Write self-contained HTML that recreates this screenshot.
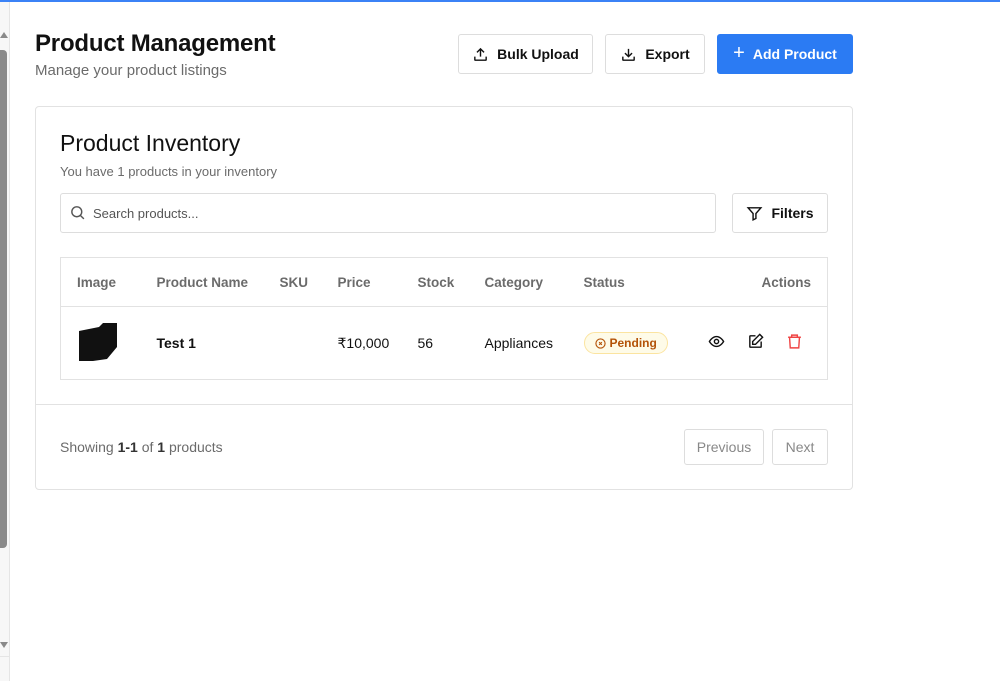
<!DOCTYPE html>
<html><head><meta charset="utf-8"><style>
*{box-sizing:border-box;margin:0;padding:0}
body{width:1000px;height:681px;background:#fff;font-family:"Liberation Sans","DejaVu Sans",sans-serif;position:relative;overflow:hidden;color:#111}
.top{position:absolute;left:0;top:0;width:1000px;height:2px;background:#3b82f6}
.sb{position:absolute;left:0;top:2px;width:10px;height:679px;background:#f7f7f7;border-right:1px solid #e5e5e5}
.thumb{position:absolute;left:0;top:48px;width:7px;height:498px;background:#8a8a8a;border-radius:0 4px 4px 0}
.abs{position:absolute}
h1{position:absolute;left:35px;top:30px;font-size:24px;font-weight:bold;letter-spacing:-0.2px}
.sub{left:35px;top:62px;font-size:15px;color:#6b6b6b}
.btn{position:absolute;height:40px;border:1px solid #ddd;border-radius:3px;display:flex;align-items:center;justify-content:center;gap:8px;font-size:14px;font-weight:bold;background:#fff}
.card{position:absolute;left:35px;top:106px;width:818px;height:384px;border:1px solid #e2e2e2;border-radius:4px}
table{position:absolute;left:60px;top:257px;width:768px;height:123px;border:1px solid #e2e2e2;border-collapse:collapse;font-size:14px}
th{text-align:left;color:#6b6b6b;font-weight:bold;height:49px;border-bottom:1px solid #e2e2e2;font-size:13.5px}
td{height:73px}
</style></head><body>
<div class="top"></div>
<div class="sb"><div class="thumb"></div>
<div class="abs" style="left:0;top:30px;width:0;height:0;border-left:4px solid transparent;border-right:4px solid transparent;border-bottom:6px solid #8a8a8a"></div>
<div class="abs" style="left:0;top:640px;width:0;height:0;border-left:4px solid transparent;border-right:4px solid transparent;border-top:6px solid #8a8a8a"></div>
<div class="abs" style="left:0;top:654px;width:10px;height:1px;background:#e5e5e5"></div></div>
<h1>Product Management</h1>
<div class="abs sub">Manage your product listings</div>
<div class="btn" style="left:458px;top:34px;width:135px"><svg width="17" height="17" viewBox="0 0 24 24" fill="none" stroke="#111" stroke-width="2"><path d="M4 15v4a1 1 0 001 1h14a1 1 0 001-1v-4M12 15V4M7 9l5-5 5 5"/></svg>Bulk Upload</div>
<div class="btn" style="left:605px;top:34px;width:100px"><svg width="17" height="17" viewBox="0 0 24 24" fill="none" stroke="#111" stroke-width="2"><path d="M4 15v4a1 1 0 001 1h14a1 1 0 001-1v-4M12 4v11M7 10l5 5 5-5"/></svg>Export</div>
<div class="btn" style="left:717px;top:34px;width:136px;background:#2b7bf3;border-color:#2b7bf3;color:#fff"><span style="font-size:20px;font-weight:normal;margin-top:-2px">+</span>Add Product</div>
<div class="card"></div>
<div class="abs" style="left:60px;top:130px;font-size:23px">Product Inventory</div>
<div class="abs" style="left:60px;top:164px;font-size:13px;color:#6b6b6b">You have 1 products in your inventory</div>
<div class="abs" style="left:60px;top:193px;width:656px;height:40px;border:1px solid #ddd;border-radius:3px;font-size:13px;color:#555;padding:12px 0 0 32px">Search products...<svg class="abs" style="left:8px;top:10px" width="17" height="17" viewBox="0 0 24 24" fill="none" stroke="#555" stroke-width="2"><circle cx="11" cy="11" r="7"/><path d="M16 16l5 5"/></svg></div>
<div class="btn" style="left:732px;top:193px;width:96px"><svg width="17" height="17" viewBox="0 0 24 24" fill="none" stroke="#111" stroke-width="2"><path d="M3 4h18l-7 8v7l-4 2v-9z"/></svg>Filters</div>
<table><tr><th style="padding-left:16px;width:96px">Image</th><th style="width:123px">Product Name</th><th style="width:58px">SKU</th><th style="width:80px">Price</th><th style="width:67px">Stock</th><th style="width:99px">Category</th><th>Status</th><th style="text-align:right;padding-right:16px">Actions</th></tr>
<tr><td style="padding-left:16px"><svg width="42" height="38" viewBox="0 0 42 38"><path d="M2 8L22 4L26 0H40V24L30 36L16 38H2Z" fill="#111"/></svg></td><td style="font-weight:bold">Test 1</td><td></td><td>₹10,000</td><td>56</td><td>Appliances</td><td><span style="display:inline-flex;align-items:center;gap:4px;height:22px;padding:0 10px;border:1px solid #fbe4a0;background:#fefbe8;border-radius:11px;color:#b45309;font-size:12px;font-weight:bold"><svg width="11" height="11" viewBox="0 0 24 24" fill="none" stroke="#b45309" stroke-width="2.5"><circle cx="12" cy="12" r="10"/><path d="M9 9l6 6M15 9l-6 6"/></svg>Pending</span></td>
<td style="text-align:right;padding-right:24px"><svg width="17" height="17" viewBox="0 0 24 24" fill="none" stroke="#111" stroke-width="2"><path d="M2 12s4-7 10-7 10 7 10 7-4 7-10 7S2 12 2 12z"/><circle cx="12" cy="12" r="3"/></svg><svg style="margin-left:22px" width="17" height="17" viewBox="0 0 24 24" fill="none" stroke="#111" stroke-width="2"><path d="M12 4H5a1 1 0 00-1 1v14a1 1 0 001 1h14a1 1 0 001-1v-7"/><path d="M18 2l4 4-10 10H8v-4z"/></svg><svg style="margin-left:22px" width="17" height="17" viewBox="0 0 24 24" fill="none" stroke="#ef4444" stroke-width="2"><path d="M3 6h18M8 6V3h8v3M5 6l1 15h12l1-15"/></svg></td></tr></table>
<div class="abs" style="left:36px;top:404px;width:816px;height:1px;background:#e2e2e2"></div>
<div class="abs" style="left:60px;top:439px;font-size:14px;color:#6b6b6b">Showing <b style="color:#333">1-1</b> of <b style="color:#333">1</b> products</div>
<div class="btn" style="left:684px;top:429px;width:80px;height:36px;font-weight:normal;color:#888">Previous</div>
<div class="btn" style="left:772px;top:429px;width:56px;height:36px;font-weight:normal;color:#888">Next</div>
</body></html>
